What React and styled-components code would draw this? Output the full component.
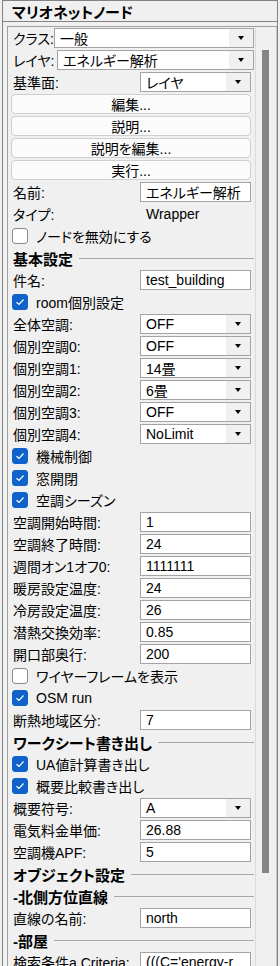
import React from "react";
import styled, { createGlobalStyle } from "styled-components";

const Global = createGlobalStyle`
  html, body { margin: 0; padding: 0; background: #f0f0f0; }
  body {
    font-family: "Liberation Sans", "Noto Sans CJK JP", sans-serif;
    font-size: 14px;
    color: #000;
    font-feature-settings: "palt";
  }
`;

const Frame = styled.div`
  width: 276px;
  height: 966px;
  box-sizing: border-box;
  margin-left: 2px;
  border-left: 1px solid #828282;
  border-right: 1px solid #828282;
  display: flex;
  flex-direction: column;
  overflow: hidden;
`;

const TitleBar = styled.div`
  height: 22px;
  box-sizing: border-box;
  border-top: 1px solid #828282;
  border-bottom: 1px solid #828282;
  display: flex;
  align-items: center;
  padding-left: 9px;
  font-weight: bold;
  font-size: 15px;
  flex: none;
`;

const Panel = styled.div`
  margin-top: 4px;
  flex: 1;
  display: grid;
  grid-template-columns: 1fr 21px;
  border-top: 1px solid #a0a0a0;
  border-left: 1px solid #a0a0a0;
  margin-left: 4px;
  overflow: hidden;
`;

const Content = styled.div`
  padding: 0 0 0 3px;
  display: flex;
  flex-direction: column;
  border-right: 1px solid #dadada;
`;

const Track = styled.div`
  position: relative;
  background: #f0f0f0;
  border-right: 1px solid #c8c8c8;
`;

const Thumb = styled.div`
  position: absolute;
  left: 6px;
  width: 7px;
  top: 23px;
  height: 823px;
  background: #858585;
`;

const Row = styled.div`
  height: 22px;
  display: flex;
  align-items: center;
  flex: none;
`;

const Label = styled.div`
  width: ${(p) => p.$w || 129}px;
  padding-left: 2px;
  box-sizing: border-box;
  white-space: nowrap;
  flex: none;
`;

const TextBox = styled.div`
  width: 111px;
  height: 20px;
  box-sizing: border-box;
  border: 1px solid #a3a3a3;
  background: #fff;
  padding-left: 5px;
  display: flex;
  align-items: center;
  white-space: nowrap;
  overflow: hidden;
  flex: none;
`;

const Plain = styled.div`
  padding-left: 6px;
`;

const Select = styled.div`
  flex: 1;
  max-width: ${(p) => (p.$wide ? "none" : "111px")};
  height: 20px;
  box-sizing: border-box;
  border: 1px solid #a3a3a3;
  background: #fff;
  display: flex;
  align-items: center;
  margin-right: 1px;
`;

const SelectText = styled.div`
  flex: 1;
  padding-left: 5px;
  white-space: nowrap;
  overflow: hidden;
`;

const Arrow = styled.div`
  width: 24px;
  align-self: stretch;
  background: #f0f0f0;
  display: flex;
  align-items: center;
  justify-content: center;
  &::after {
    content: "";
    border-left: 3.5px solid transparent;
    border-right: 3.5px solid transparent;
    border-top: 4px solid #000;
  }
`;

const Button = styled.div`
  width: 240px;
  height: 20px;
  box-sizing: border-box;
  border: 1px solid #cfcfcf;
  border-radius: 4px;
  background: #fbfbfb;
  display: flex;
  align-items: center;
  justify-content: center;
`;

const Box = styled.div`
  width: 16px;
  height: 16px;
  box-sizing: border-box;
  border-radius: 3px;
  margin-left: 1px;
  margin-right: 8px;
  display: flex;
  align-items: center;
  justify-content: center;
  background: ${(p) => (p.$on ? "#0f62c9" : "#fff")};
  border: 1px solid ${(p) => (p.$on ? "#0f62c9" : "#8a8a8a")};
`;

const Header = styled.div`
  height: 22px;
  display: flex;
  align-items: center;
  font-weight: bold;
  font-size: 15px;
  padding-left: 2px;
  flex: none;
  &::after {
    content: "";
    flex: 1;
    height: 1px;
    background: #a8a8a8;
    margin-left: 6px;
    margin-right: 1px;
  }
`;

function Field({ label, value }) {
  return (
    <Row>
      <Label>{label}</Label>
      <TextBox>{value}</TextBox>
    </Row>
  );
}

function Drop({ label, value, w, wide }) {
  return (
    <Row>
      <Label $w={w}>{label}</Label>
      <Select $wide={wide}>
        <SelectText>{value}</SelectText>
        <Arrow />
      </Select>
    </Row>
  );
}

function Check({ on, label }) {
  return (
    <Row>
      <Box $on={on}>
        {on && (
          <svg width="10" height="8" viewBox="0 0 10 8">
            <path d="M1.5 4.2 L4 6.5 L8.5 1.5" fill="none" stroke="#fff" strokeWidth="1.2" />
          </svg>
        )}
      </Box>
      {label}
    </Row>
  );
}

function Btn({ children }) {
  return (
    <Row>
      <Button>{children}</Button>
    </Row>
  );
}

export default function App() {
  return (
    <>
      <Global />
      <Frame>
        <TitleBar>マリオネットノード</TitleBar>
        <Panel>
          <Content>
            <Drop label="クラス:" value="一般" w={43} wide />
            <Drop label="レイヤ:" value="エネルギー解析" w={46} wide />
            <Drop label="基準面:" value="レイヤ" />
            <Btn>編集...</Btn>
            <Btn>説明...</Btn>
            <Btn>説明を編集...</Btn>
            <Btn>実行...</Btn>
            <Field label="名前:" value="エネルギー解析" />
            <Row>
              <Label>タイプ:</Label>
              <Plain>Wrapper</Plain>
            </Row>
            <Check label="ノードを無効にする" />
            <Header>基本設定</Header>
            <Field label="件名:" value="test_building" />
            <Check on label="room個別設定" />
            <Drop label="全体空調:" value="OFF" />
            <Drop label="個別空調0:" value="OFF" />
            <Drop label="個別空調1:" value="14畳" />
            <Drop label="個別空調2:" value="6畳" />
            <Drop label="個別空調3:" value="OFF" />
            <Drop label="個別空調4:" value="NoLimit" />
            <Check on label="機械制御" />
            <Check on label="窓開閉" />
            <Check on label="空調シーズン" />
            <Field label="空調開始時間:" value="1" />
            <Field label="空調終了時間:" value="24" />
            <Field label="週間オン1オフ0:" value="1111111" />
            <Field label="暖房設定温度:" value="24" />
            <Field label="冷房設定温度:" value="26" />
            <Field label="潜熱交換効率:" value="0.85" />
            <Field label="開口部奥行:" value="200" />
            <Check label="ワイヤーフレームを表示" />
            <Check on label="OSM run" />
            <Field label="断熱地域区分:" value="7" />
            <Header>ワークシート書き出し</Header>
            <Check on label="UA値計算書き出し" />
            <Check on label="概要比較書き出し" />
            <Drop label="概要符号:" value="A" />
            <Field label="電気料金単価:" value="26.88" />
            <Field label="空調機APF:" value="5" />
            <Header>オブジェクト設定</Header>
            <Header>-北側方位直線</Header>
            <Field label="直線の名前:" value="north" />
            <Header>-部屋</Header>
            <Field label="検索条件a Criteria:" value="(((C='energy-r" />
          </Content>
          <Track>
            <Thumb />
          </Track>
        </Panel>
      </Frame>
    </>
  );
}
